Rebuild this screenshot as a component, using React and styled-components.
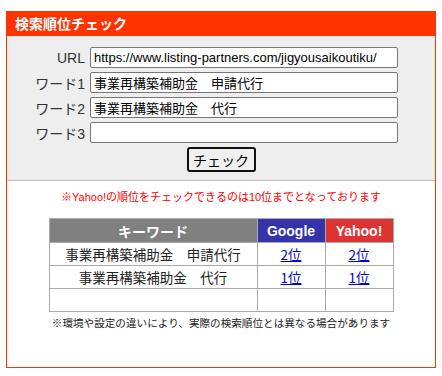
import React from 'react'
import styled, { createGlobalStyle } from 'styled-components'

const GlobalStyle = createGlobalStyle`
  body {
    margin: 0;
    background: #fff;
    font-family: "Liberation Sans", "Noto Sans CJK JP", sans-serif;
  }
`

const FIELDS = [
  { label: 'URL', value: 'https://www.listing-partners.com/jigyousaikoutiku/' },
  { label: 'ワード1', value: '事業再構築補助金　申請代行' },
  { label: 'ワード2', value: '事業再構築補助金　代行' },
  { label: 'ワード3', value: '' },
]

const RESULTS = [
  { word: '事業再構築補助金　申請代行', google: '2位', yahoo: '2位' },
  { word: '事業再構築補助金　代行', google: '1位', yahoo: '1位' },
  { word: '', google: '', yahoo: '' },
]

const App = () => (
  <>
    <GlobalStyle />
    <Box>
      <Title>検索順位チェック</Title>
      <FormArea>
        <FormGrid>
          {FIELDS.map(({ label, value }) => (
            <React.Fragment key={label}>
              <Label>{label}</Label>
              <Input defaultValue={value} />
            </React.Fragment>
          ))}
        </FormGrid>
        <ButtonRow>
          <CheckButton>チェック</CheckButton>
        </ButtonRow>
      </FormArea>
      <ResultArea>
        <Note>※Yahoo!の順位をチェックできるのは10位までとなっております</Note>
        <Table>
          <thead>
            <tr>
              <Head bg="#808080" width="207px">キーワード</Head>
              <Head bg="#3333aa" width="67px">Google</Head>
              <Head bg="#dd3333" width="67px">Yahoo!</Head>
            </tr>
          </thead>
          <tbody>
            {RESULTS.map((r, i) => (
              <tr key={i}>
                <Cell>{r.word}</Cell>
                <Cell>{r.google && <RankLink href="#">{r.google}</RankLink>}</Cell>
                <Cell>{r.yahoo && <RankLink href="#">{r.yahoo}</RankLink>}</Cell>
              </tr>
            ))}
          </tbody>
        </Table>
        <Footnote>※環境や設定の違いにより、実際の検索順位とは異なる場合があります</Footnote>
      </ResultArea>
    </Box>
  </>
)

const Box = styled.div`
  box-sizing: border-box;
  width: 430px;
  margin: 11px 0 0 6px;
  border: 1px solid #ff3300;
  border-top: none;
`

const Title = styled.div`
  height: 25px;
  line-height: 25px;
  background: #ff3300;
  margin: 0 -1px;
  padding-left: 9px;
  color: #fff;
  font-weight: bold;
  font-size: 14px;
  font-family: "Noto Sans CJK JP", sans-serif;
`

const FormArea = styled.div`
  background: #eeeeee;
  padding: 11px 0 8px;
  border-bottom: 1px solid #bbbbbb;
`

const FormGrid = styled.div`
  display: grid;
  grid-template-columns: 78px 308px;
  column-gap: 5px;
  row-gap: 4px;
  align-items: center;
`

const Label = styled.div`
  text-align: right;
  font-size: 14px;
  color: #333;
  font-family: "Liberation Sans", "Noto Sans CJK JP", sans-serif;
`

const Input = styled.input`
  box-sizing: border-box;
  height: 21px;
  width: 100%;
  margin: 0;
  padding: 1px 3px;
  border: 1px solid #767676;
  border-radius: 2px;
  background: #fff;
  font-size: 13px;
  color: #000;
  font-family: "Liberation Sans", "Noto Sans CJK JP", sans-serif;
`

const ButtonRow = styled.div`
  display: flex;
  justify-content: center;
  margin-top: 4px;
`

const CheckButton = styled.button`
  box-sizing: border-box;
  width: 69px;
  height: 25px;
  padding: 0;
  border: 2px solid #111;
  border-radius: 3px;
  background: #efefef;
  font-size: 14px;
  color: #000;
  font-family: "Noto Sans CJK JP", sans-serif;
`

const ResultArea = styled.div`
  background: #fff;
  padding: 9px 0 37px;
`

const Note = styled.div`
  text-align: center;
  color: #ff0000;
  font-size: 11px;
  line-height: 15px;
  font-family: "Liberation Sans", "Noto Sans CJK JP", sans-serif;
`

const Table = styled.table`
  border-collapse: collapse;
  margin: 13px auto 0;
  width: 341px;
  table-layout: fixed;
`

const Head = styled.th`
  width: ${p => p.width};
  height: 23px;
  padding: 0;
  background: ${p => p.bg};
  color: #fff;
  font-size: 14px;
  font-weight: bold;
  border: 1px solid #aaaaaa;
  font-family: "Liberation Sans", "Noto Sans CJK JP", sans-serif;
`

const Cell = styled.td`
  height: 22px;
  padding: 0;
  text-align: center;
  font-size: 13.5px;
  color: #222;
  border: 1px solid #aaaaaa;
  font-family: "Noto Sans CJK JP", sans-serif;
`

const RankLink = styled.a`
  color: #0000cc;
  text-decoration: underline;
`

const Footnote = styled.div`
  margin-top: 4px;
  text-align: center;
  font-size: 10.6px;
  line-height: 14px;
  color: #222;
  font-family: "Noto Sans CJK JP", sans-serif;
`

export default App
